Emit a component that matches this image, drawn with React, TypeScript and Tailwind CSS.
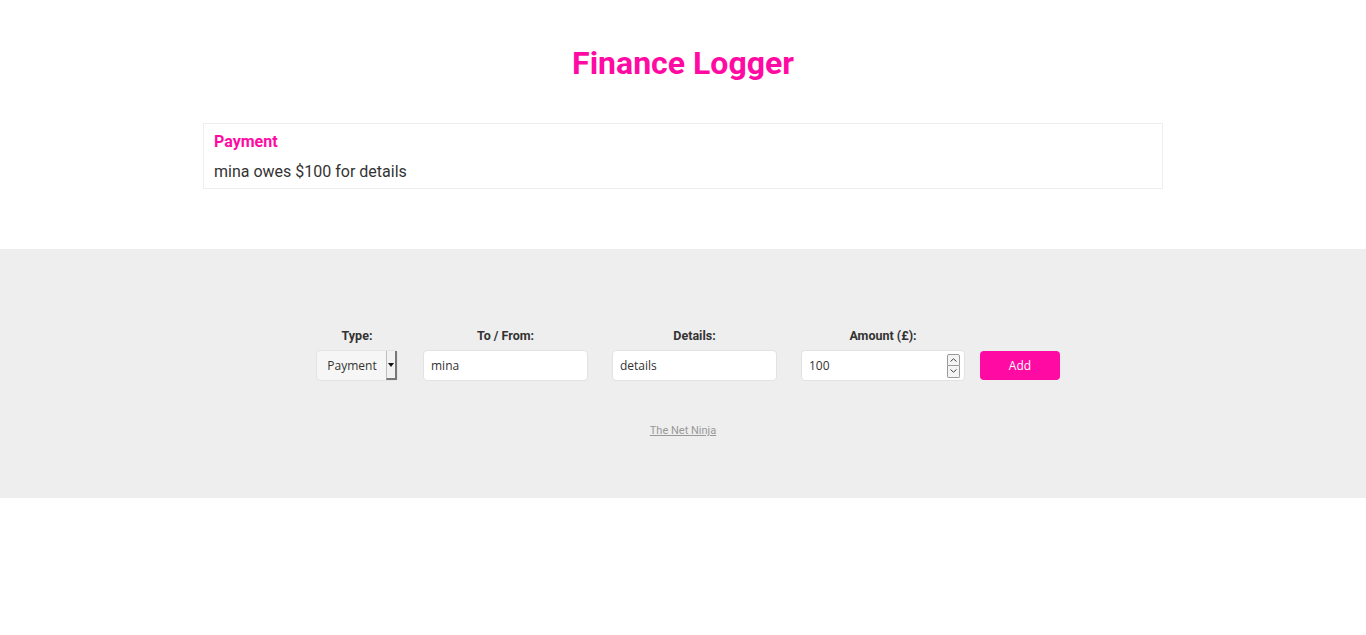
import type { ReactElement } from 'react'

const PINK = 'text-[#ff0aa3]'

function Field({ label, children }: { label: string; children: ReactElement }): ReactElement {
  return (
    <div className="flex flex-col items-center">
      <label className="mb-[7px] text-[12.5px] font-bold leading-[15px] text-[#333]">{label}</label>
      {children}
    </div>
  )
}

function TypeSelect(): ReactElement {
  return (
    <div className="flex h-[31px] w-[82px] rounded-[4px] border border-[#e4e4e4] bg-[#f6f6f6]">
      <span className="flex flex-1 items-center justify-center pl-[1px] text-[12px] text-[#333]">Payment</span>
      <span className="flex w-[11px] items-center justify-center border-l border-[#bdbdbd] border-r-2 border-r-[#777] border-b-2 border-b-[#777] bg-[#f2f2f2]">
        <svg width="6" height="4" viewBox="0 0 6 4">
          <path d="M0 0h6L3 4z" fill="#111" />
        </svg>
      </span>
    </div>
  )
}

function TextBox({ value, w = 'w-[165px]' }: { value: string; w?: string }): ReactElement {
  return (
    <div className={`flex h-[31px] ${w} items-center rounded-[4px] border border-[#e2e2e2] bg-white px-[7px] text-[12px] text-[#333]`}>
      {value}
    </div>
  )
}

function NumberBox(): ReactElement {
  return (
    <div className="flex h-[31px] w-[164px] items-center rounded-[4px] border border-[#e2e2e2] bg-white pl-[7px] pr-[4px] text-[12px] text-[#333]">
      <span className="flex-1">100</span>
      <span className="flex flex-col">
        <span className="flex h-[12px] w-[13px] items-center justify-center rounded-t-[2px] border border-[#999] bg-[#f4f4f4]">
          <svg width="7" height="4" viewBox="0 0 7 4">
            <path d="M0.5 3.5L3.5 0.8L6.5 3.5" stroke="#444" fill="none" strokeWidth="1" />
          </svg>
        </span>
        <span className="flex h-[12px] w-[13px] items-center justify-center rounded-b-[2px] border border-t-0 border-[#999] bg-[#f4f4f4]">
          <svg width="7" height="4" viewBox="0 0 7 4">
            <path d="M0.5 0.5L3.5 3.2L6.5 0.5" stroke="#444" fill="none" strokeWidth="1" />
          </svg>
        </span>
      </span>
    </div>
  )
}

export default function App(): ReactElement {
  return (
    <div className="min-h-[635px] bg-white font-['Roboto',sans-serif] text-[#333]">
      <header className="pt-[45px]">
        <h1 className={`text-center text-[32px] font-bold leading-[37px] ${PINK}`}>Finance Logger</h1>
      </header>

      <div className="mx-auto mt-[41px] w-[960px]">
        <ul>
          <li className="border border-[#eee] px-[10px] pb-[6px] pt-[7px]">
            <h4 className={`text-[16px] font-bold leading-[22px] ${PINK}`}>Payment</h4>
            <p className="mt-[9px] text-[16px] leading-[20px] text-[#333]">mina owes $100 for details</p>
          </li>
        </ul>
      </div>

      <footer className="mt-[60px] h-[249px] bg-[#eee] pt-[79px]">
        <form className="flex items-end justify-center pl-[10px] font-['Open_Sans',sans-serif]">
          <div className="font-['Roboto',sans-serif]">
            <Field label="Type:">
              <div className="font-['Open_Sans',sans-serif]">
                <TypeSelect />
              </div>
            </Field>
          </div>
          <div className="ml-[25px] font-['Roboto',sans-serif]">
            <Field label="To / From:">
              <div className="font-['Open_Sans',sans-serif]">
                <TextBox value="mina" />
              </div>
            </Field>
          </div>
          <div className="ml-[24px] font-['Roboto',sans-serif]">
            <Field label="Details:">
              <div className="font-['Open_Sans',sans-serif]">
                <TextBox value="details" />
              </div>
            </Field>
          </div>
          <div className="ml-[24px] font-['Roboto',sans-serif]">
            <Field label="Amount (£):">
              <div className="font-['Open_Sans',sans-serif]">
                <NumberBox />
              </div>
            </Field>
          </div>
          <button
            type="button"
            className="mb-[1px] ml-[15px] h-[29px] w-[80px] rounded-[4px] bg-[#ff0aa3] text-[12px] text-white"
          >
            Add
          </button>
        </form>
        <div className="mt-[36px] text-center">
          <a className="text-[11px] text-[#999] underline">The Net Ninja</a>
        </div>
      </footer>
    </div>
  )
}
